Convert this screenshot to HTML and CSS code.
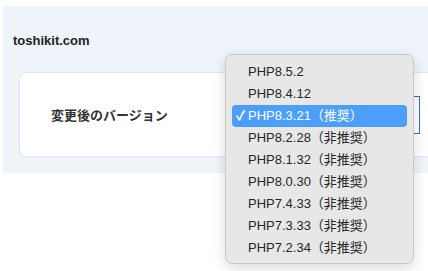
FILE: index.html
```html
<!DOCTYPE html>
<html lang="ja">
<head>
    <meta charset="UTF-8">
    <meta name="viewport" content="width=device-width, initial-scale=1.0">
    <title>PHPバージョン設定</title>
    <link rel="stylesheet" href="styles.css">
</head>
<body>
    <div class="panel">
        <h1 class="site-name">toshikit.com</h1>
        <div class="setting-card">
            <div class="setting-label">変更後のバージョン</div>
            <div class="version-select">
                <ul class="version-menu">
                    <li>PHP8.5.2</li>
                    <li>PHP8.4.12</li>
                    <li class="selected"><span class="check">✓</span>PHP8.3.21（推奨）</li>
                    <li>PHP8.2.28（非推奨）</li>
                    <li>PHP8.1.32（非推奨）</li>
                    <li>PHP8.0.30（非推奨）</li>
                    <li>PHP7.4.33（非推奨）</li>
                    <li>PHP7.3.33（非推奨）</li>
                    <li>PHP7.2.34（非推奨）</li>
                </ul>
            </div>
        </div>
    </div>
</body>
</html>
```

FILE: styles.css
```css
body {
    margin: 6px 0 0 3px;
    min-height: calc(100vh - 6px);
    font-family: "Liberation Sans", "Noto Sans CJK JP", sans-serif;
    background-color: #ffffff;
    color: #222;
}
.panel {
    background-color: #eff3fa;
    padding: 27px 0 16px 10px;
}
.site-name {
    margin: 0;
    font-size: 13px;
    line-height: 15px;
    font-weight: bold;
    color: #222;
}
.setting-card {
    margin: 24px 0 0 6px;
    height: 83px;
    background-color: #ffffff;
    border: 1px solid #e2e5ea;
    border-right: none; /* card continues past the window edge */
    border-radius: 7px 0 0 7px;
    padding-left: 31px;
    display: flex;
    align-items: center;
}
.setting-label {
    flex: 0 0 177px;
    font-size: 13px;
    font-weight: 700;
    color: #333;
}
.version-select {
    position: relative;
    width: 190px;
    height: 36px;
    border: 1px solid #2d6fd2;
    background-color: #ffffff;
}
.version-menu {
    position: absolute;
    top: -43px;
    left: -4px;
    width: 187px;
    margin: 0;
    padding: 6px 0 4px;
    list-style: none;
    background-color: #e7e7e8;
    border: 1px solid #c9c9cb;
    border-radius: 7px;
    box-shadow: 0 4px 14px rgba(0, 0, 0, 0.14);
    z-index: 10;
}
.version-menu li {
    position: relative;
    height: 22px;
    line-height: 22px;
    margin: 0 6px;
    padding-left: 16px;
    font-size: 13px;
    color: #262626;
    border-radius: 4px;
    white-space: nowrap;
}
.version-menu li.selected {
    background-color: #4b9ffa;
    color: #ffffff;
}
.check {
    position: absolute;
    left: 4px;
    top: 0;
    font-weight: bold;
}
```
